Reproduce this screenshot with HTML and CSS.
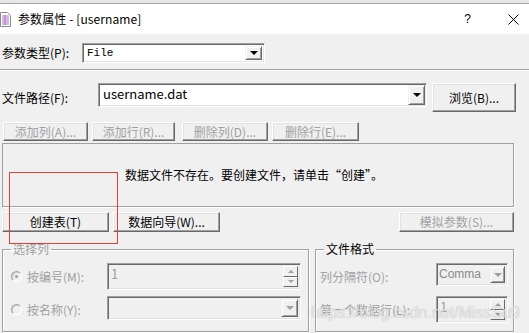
FILE: index.html
```html
<!DOCTYPE html>
<html lang="zh">
<head>
<meta charset="UTF-8">
<title>参数属性 - [username]</title>
<link rel="stylesheet" href="styles.css">
</head>
<body>

<div class="frame-top"></div>
<div class="titlebar">
    <svg class="app-icon" viewBox="0 0 11 15">
        <path d="M0.5 0.5h7l3 3v11h-10z" fill="#fff" stroke="#8a8a8a"/>
        <path d="M2 4h7M2 6h7M2 8h7M2 10h7M2 12h7" stroke="#b070c8"/>
        <path d="M5 3v10" stroke="#b070c8"/>
    </svg>
    <span class="title">参数属性 - [username]</span>
    <span class="help">?</span>
    <svg class="close" viewBox="0 0 11 11">
        <path d="M0.5 0.5l10 10M10.5 0.5l-10 10" stroke="#000" stroke-width="1"/>
    </svg>
</div>

<div class="content">
    <div class="row type-row">
        <label class="lbl lbl-type">参数类型(P):</label>
        <div class="combo combo-type">
            <span class="combo-text mono">File</span>
            <span class="drop"></span>
        </div>
    </div>

    <div class="sep"></div>

    <div class="row path-row">
        <label class="lbl lbl-path">文件路径(F):</label>
        <div class="combo combo-path">
            <span class="combo-text path-text">username.dat</span>
            <span class="drop"></span>
        </div>
        <button class="btn btn-browse">浏览(B)...</button>
    </div>

    <div class="row edit-row">
        <button class="btn btn-small off b-addcol">添加列(A)...</button>
        <button class="btn btn-small off b-addrow">添加行(R)...</button>
        <button class="btn btn-small off b-delcol">删除列(D)...</button>
        <button class="btn btn-small off b-delrow">删除行(E)...</button>
    </div>

    <div class="panel">数据文件不存在。要创建文件，请单击“创建”。</div>

    <div class="row action-row">
        <button class="btn btn-small b-create">创建表(T)</button>
        <button class="btn btn-small b-wizard">数据向导(W)...</button>
        <button class="btn btn-small off b-mock">模拟参数(S)...</button>
    </div>

    <div class="groups">
        <fieldset class="group group-cols">
            <legend class="off">选择列</legend>
            <div class="grow grow-1">
                <span class="radio checked"></span>
                <span class="glabel off">按编号(M):</span>
                <div class="field spin spin-wide">
                    <span class="field-text">1</span>
                    <span class="spin-btns"><span class="up"></span><span class="down"></span></span>
                </div>
            </div>
            <div class="grow grow-2">
                <span class="radio"></span>
                <span class="glabel off">按名称(Y):</span>
                <div class="field combo-name">
                    <span class="field-text"></span>
                    <span class="drop drop-off"></span>
                </div>
            </div>
        </fieldset>

        <fieldset class="group group-format">
            <legend>文件格式</legend>
            <div class="grow grow-1">
                <span class="flabel off">列分隔符(O):</span>
                <div class="field combo-sep">
                    <span class="field-text">Comma</span>
                    <span class="drop drop-off"></span>
                </div>
            </div>
            <div class="grow grow-2">
                <span class="flabel off">第一个数据行(L):</span>
                <div class="field spin spin-narrow">
                    <span class="field-text">1</span>
                    <span class="spin-btns"><span class="up"></span><span class="down"></span></span>
                </div>
            </div>
        </fieldset>
    </div>
</div>

<div class="red-mark"></div>
<div class="watermark">https://blog.csdn.net/MissSu9</div>

</body>
</html>
```

FILE: styles.css
```css
* {
    box-sizing: border-box;
}
body {
    margin: 0;
    width: 529px;
    height: 333px;
    overflow: hidden;
    position: relative;
    background-color: #f0f0f0;
    font-family: "Noto Sans CJK SC", "Liberation Sans", sans-serif;
    font-size: 12px;
    line-height: 16px;
    color: #000;
}
.off {
    color: #a0a0a0;
}

/* window frame */
.frame-top {
    height: 4px;
    background-color: #e6e6e6;
    border-bottom: 1px solid #a9a9a9;
}
.titlebar {
    height: 30px;
    background-color: #fff;
    display: flex;
    align-items: center;
}
.app-icon {
    width: 11px;
    height: 15px;
    margin-right: 7px;
}
.title {
    font-size: 12px;
    letter-spacing: 0.1px;
}
.help {
    margin-left: auto;
    margin-right: 37px;
    font-family: "Liberation Sans", sans-serif;
    font-size: 12px;
}
.close {
    width: 11px;
    height: 11px;
    margin-right: 10px;
}

.content {
    padding: 9px 0 0 2px;
}
.row {
    display: flex;
    align-items: center;
}

/* controls */
.combo {
    display: flex;
    background-color: #fff;
    border: 1px solid;
    border-color: #a0a0a0 #fff #fff #a0a0a0;
    box-shadow: inset 1px 1px #696969, inset -1px -1px #e3e3e3;
    padding: 2px;
}
.combo-text {
    flex: 1;
    padding-left: 2px;
    white-space: nowrap;
}
.mono {
    font-family: "Liberation Mono", monospace;
    font-size: 11px;
    line-height: 14px;
}
.drop {
    width: 17px;
    background-color: #f0f0f0;
    border: 1px solid;
    border-color: #f0f0f0 #696969 #696969 #f0f0f0;
    box-shadow: inset 1px 1px #fff, inset -1px -1px #a0a0a0;
    display: flex;
    align-items: center;
    justify-content: center;
}
.drop::after {
    content: "";
    border-left: 4px solid transparent;
    border-right: 4px solid transparent;
    border-top: 4px solid #000;
}
.drop-off::after {
    border-top-color: #a0a0a0;
}
.btn {
    font-family: "Noto Sans CJK SC", sans-serif;
    font-size: 12px;
    line-height: 14px;
    padding: 0;
    background-color: #f0f0f0;
    border: 1px solid;
    border-color: #fff #696969 #696969 #fff;
    box-shadow: inset -1px -1px #a0a0a0, inset 1px 1px #e3e3e3;
    color: #000;
}
.btn.off {
    color: #a0a0a0;
}

/* type row */
.type-row {
    height: 20px;
}
.lbl-type {
    width: 80px;
}
.combo-type {
    width: 183px;
    height: 20px;
}

.sep {
    margin: 6px 0 0 -2px;
    height: 2px;
    border-top: 1px solid #a0a0a0;
    border-bottom: 1px solid #fff;
}

/* path row */
.path-row {
    margin-top: 12px;
    height: 29px;
}
.lbl-path {
    width: 96px;
}
.combo-path {
    align-self: flex-start;
    width: 329px;
    height: 24px;
    padding: 1px 1px 1px 2px;
}
.path-text {
    font-size: 13px;
    line-height: 18px;
}
.btn-browse {
    width: 84px;
    height: 29px;
    margin-left: 5px;
}

/* edit buttons */
.edit-row {
    margin-top: 10px;
    height: 19px;
}
.btn-small {
    height: 19px;
}
.b-addcol {
    width: 85px;
    margin-left: 1px;
}
.b-addrow {
    width: 83px;
    margin-left: 4px;
}
.b-delcol {
    width: 86px;
    margin-left: 7px;
}
.b-delrow {
    width: 87px;
    margin-left: 4px;
}

.panel {
    margin-top: 2px;
    width: 512px;
    height: 64px;
    border: 1px solid #a0a0a0;
    box-shadow: 1px 1px #fff;
    display: flex;
    align-items: center;
    padding-left: 122px;
}

/* action row */
.action-row {
    margin-top: 5px;
    height: 20px;
    width: 512px;
}
.action-row .btn {
    height: 20px;
}
.b-create {
    width: 107px;
}
.b-wizard {
    width: 107px;
    margin-left: 4px;
}
.b-mock {
    width: 115px;
    margin-left: auto;
}

/* group boxes */
.groups {
    margin-top: 9px;
    display: flex;
}
.group {
    margin: 0;
    padding: 0;
    min-width: 0;
    height: 91px;
    border: 1px solid #a0a0a0;
    box-shadow: inset 1px 1px #fff, 1px 1px #fff;
}
.group legend {
    margin-left: 8px;
    padding: 0 2px;
    line-height: 16px;
}
.group-cols {
    width: 307px;
}
.group-format {
    width: 199px;
    margin-left: 6px;
}
.grow {
    display: flex;
    align-items: center;
}
.grow-1 {
    margin-top: 6px;
    height: 27px;
}
.grow-2 {
    margin-top: 6px;
    height: 27px;
}
.radio {
    width: 11px;
    height: 11px;
    border-radius: 50%;
    margin-left: 8px;
    border: 1px solid #a0a0a0;
    border-right-color: #fff;
    border-bottom-color: #fff;
    box-shadow: inset 1px 1px #d0d0d0;
    background-color: #f0f0f0;
    display: flex;
    align-items: center;
    justify-content: center;
}
.radio.checked::after {
    content: "";
    width: 3px;
    height: 3px;
    border-radius: 50%;
    background-color: #a0a0a0;
}
.glabel {
    width: 80px;
    margin-left: 5px;
}
.field {
    display: flex;
    background-color: #f0f0f0;
    border: 1px solid;
    border-color: #a0a0a0 #fff #fff #a0a0a0;
    box-shadow: inset 1px 1px #696969, inset -1px -1px #e3e3e3;
    padding: 2px 2px 2px 3px;
}
.field-text {
    flex: 1;
    color: #a0a0a0;
    font-size: 13px;
    line-height: 16px;
    white-space: nowrap;
}
.spin-btns {
    width: 15px;
    display: flex;
    flex-direction: column;
}
.spin-btns span {
    flex: 1;
    background-color: #f0f0f0;
    border: 1px solid;
    border-color: #fff #696969 #696969 #fff;
    display: flex;
    align-items: center;
    justify-content: center;
}
.spin-btns .up::after {
    content: "";
    border-left: 3px solid transparent;
    border-right: 3px solid transparent;
    border-bottom: 3px solid #a0a0a0;
}
.spin-btns .down::after {
    content: "";
    border-left: 3px solid transparent;
    border-right: 3px solid transparent;
    border-top: 3px solid #a0a0a0;
}
.spin-wide {
    width: 194px;
    height: 27px;
}
.combo-name {
    align-self: flex-start;
    width: 194px;
    height: 24px;
}
.flabel {
    width: 116px;
    margin-left: 4px;
}
.combo-sep {
    align-self: flex-start;
    width: 72px;
    height: 23px;
    padding-left: 2px;
}
.combo-sep .field-text {
    color: #8a8a8a;
    font-family: "Liberation Sans", sans-serif;
    font-size: 12px;
}
.combo-sep .drop {
    width: 15px;
}
.spin-narrow {
    width: 72px;
    height: 27px;
}

/* annotation overlays */
.red-mark {
    position: absolute;
    left: 9px;
    top: 172px;
    width: 109px;
    height: 72px;
    border: 1px solid #e53e3e;
}
.watermark {
    position: absolute;
    left: 311px;
    top: 303px;
    font-family: "Liberation Sans", sans-serif;
    font-size: 16px;
    line-height: 20px;
    color: rgba(255, 255, 255, 0.75);
    text-shadow: 0 0 1px rgba(0, 0, 0, 0.35);
}
```
